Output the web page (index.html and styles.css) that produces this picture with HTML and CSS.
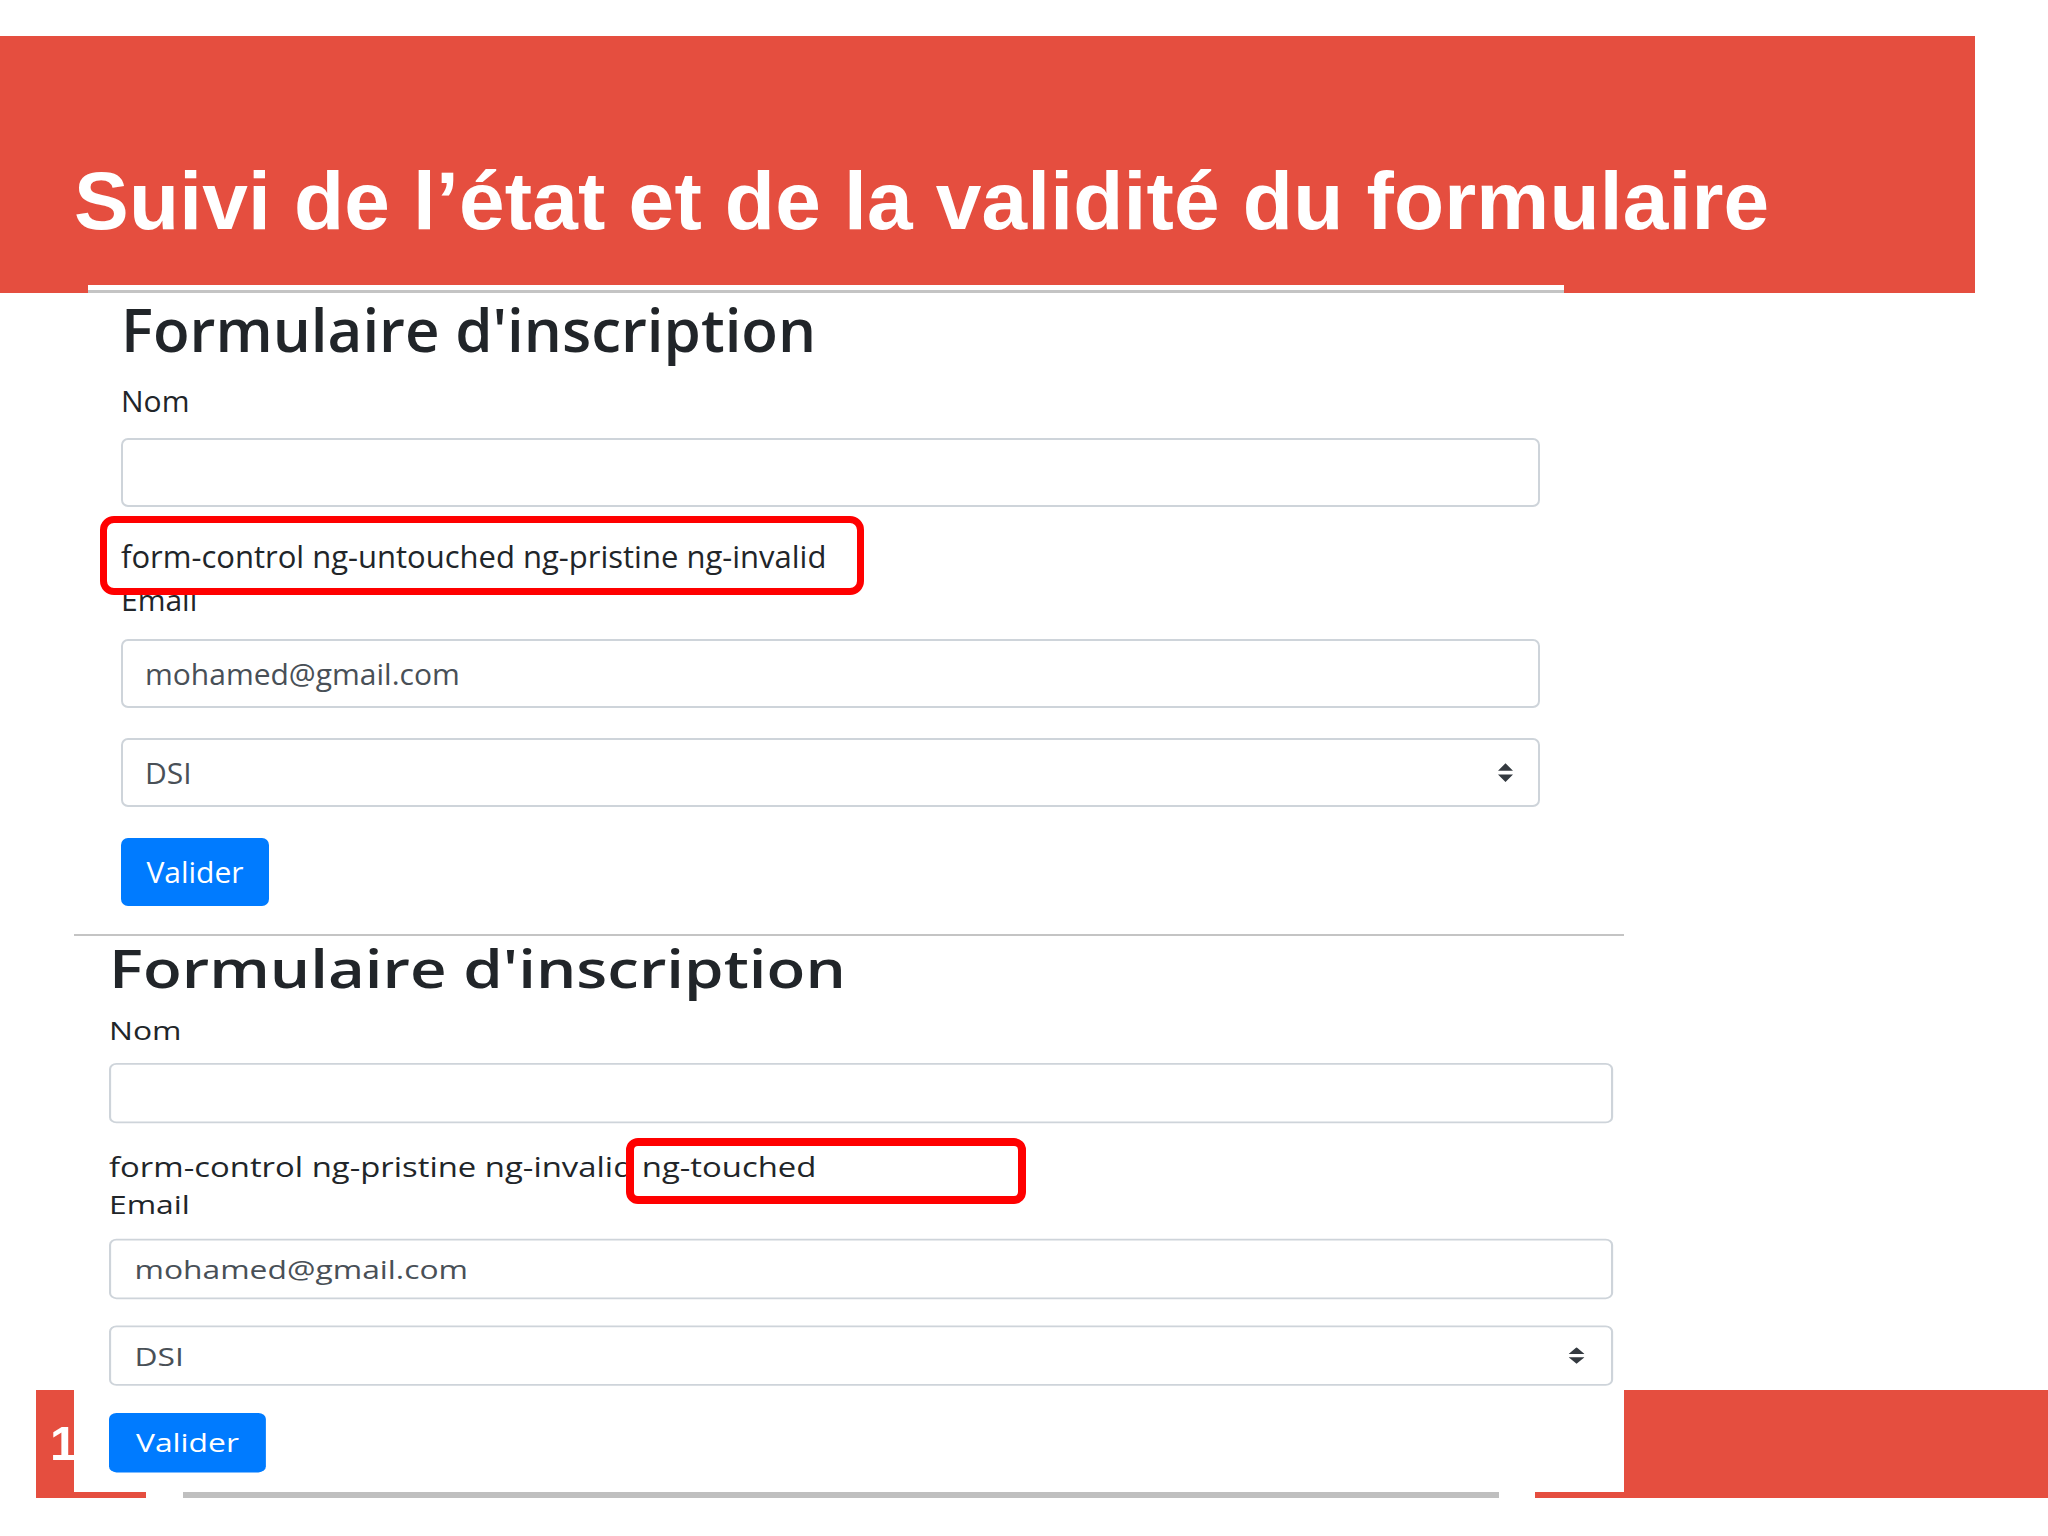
FILE: index.html
```html
<!DOCTYPE html>
<html lang="fr">
<head>
<meta charset="utf-8">
<title>Suivi de l’état et de la validité du formulaire</title>
<link rel="stylesheet" href="styles.css">
</head>
<body>
<div class="slide">
  <header class="band">
    <h1 class="title">Suivi de l’état et de la validité du formulaire</h1>
  </header>

  <section class="shot shot-one">
    <form class="bs-form">
      <h2 class="bs-title">Formulaire d'inscription</h2>
      <label class="lbl">Nom</label>
      <input class="ctl" type="text" value="" readonly>
      <div class="cls">form-control ng-untouched ng-pristine ng-invalid</div>
      <label class="lbl lbl-tight">Email</label>
      <input class="ctl ctl-email" type="text" value="mohamed@gmail.com" readonly>
      <div class="ctl sel">
        <span>DSI</span>
        <svg class="caret" viewBox="0 0 4 5" width="15" height="19"><path d="M2 0L0 2h4zm0 5L0 3h4z" fill="#343a40"/></svg>
      </div>
      <button type="button" class="btn">Valider</button>
    </form>
    <div class="mark mark-one"></div>
  </section>

  <section class="shot shot-two">
    <form class="bs-form bs-form-wide">
      <h2 class="bs-title">Formulaire d'inscription</h2>
      <label class="lbl">Nom</label>
      <input class="ctl" type="text" value="" readonly>
      <div class="cls">form-control ng-pristine ng-invalid ng-touched</div>
      <label class="lbl lbl-tight">Email</label>
      <input class="ctl ctl-email" type="text" value="mohamed@gmail.com" readonly>
      <div class="ctl sel">
        <span>DSI</span>
        <svg class="caret" viewBox="0 0 4 5" width="15" height="19"><path d="M2 0L0 2h4zm0 5L0 3h4z" fill="#343a40"/></svg>
      </div>
      <button type="button" class="btn">Valider</button>
    </form>
    <div class="mark mark-two"></div>
  </section>

  <footer class="foot">
    <div class="slide-num">1</div>
    <div class="foot-strip"><span class="gap gap-a"></span><span class="bar"></span><span class="gap gap-b"></span></div>
  </footer>
</div>
</body>
</html>
```

FILE: styles.css
```css
html, body {
  margin: 0;
  padding: 0;
  background: #ffffff;
}

.slide {
  position: relative;
  width: 2048px;
  height: 1536px;
  overflow: hidden;
  background: #ffffff;
}

/* Red title band */
.band {
  margin-top: 36px;
  width: 1975px;
  height: 257px;
  box-sizing: border-box;
  padding: 115px 0 0 74px;
  background: #e54e3f;
}

.title {
  margin: 0;
  font-family: "Liberation Sans", Arial, sans-serif;
  font-weight: 700;
  font-size: 82px;
  line-height: 100px;
  letter-spacing: 0.2px;
  color: #ffffff;
  white-space: nowrap;
}

/* Screenshots of the form */
.shot {
  position: relative;
  box-sizing: border-box;
  background: #ffffff;
}

.shot-one {
  z-index: 2;
  margin: -8px 0 0 88px;
  width: 1476px;
  height: 649px;
  padding: 8px 24px 0 33px;
  background: linear-gradient(#ffffff 0 5px, #c4c4c4 5px 8px, #ffffff 8px);
}

.shot-two {
  z-index: 2;
  margin: 0 0 0 74px;
  width: 1550px;
  height: 558px;
  padding: 0 0 0 35px;
  border-top: 2px solid #c4c4c4;
}

/* Bootstrap-like form */
.bs-form {
  width: 1419px;
  margin: 0;
  font-family: "Open Sans", "Noto Sans", sans-serif;
  color: #212529;
}

.bs-form-wide {
  transform: scale(1.06, 0.875);
  transform-origin: 0 0;
}

.bs-title {
  margin: 0;
  font-size: 60px;
  font-weight: 600;
  line-height: 72px;
  white-space: nowrap;
}

.lbl {
  display: block;
  margin-top: 14px;
  font-size: 30px;
  line-height: 44px;
}

.lbl-tight {
  margin-top: 0;
}

.ctl {
  display: flex;
  align-items: center;
  width: 100%;
  height: 69px;
  margin: 15px 0 0 0;
  box-sizing: border-box;
  padding: 0 22px;
  border: 2px solid #ced4da;
  border-radius: 7px;
  background: #ffffff;
  font-family: "Open Sans", "Noto Sans", sans-serif;
  font-size: 30px;
  line-height: 44px;
  color: #495057;
  outline: none;
}

.ctl-email {
  margin-top: 17px;
}

.sel {
  margin-top: 30px;
  justify-content: space-between;
  padding-right: 25px;
}

.caret {
  display: block;
}

.cls {
  margin-top: 27px;
  font-size: 31px;
  line-height: 44px;
  white-space: nowrap;
}

.btn {
  display: flex;
  align-items: center;
  justify-content: center;
  width: 148px;
  height: 68px;
  margin-top: 31px;
  padding: 0;
  border: 0;
  border-radius: 7px;
  background: #007bff;
  color: #ffffff;
  font-family: "Open Sans", "Noto Sans", sans-serif;
  font-size: 30px;
  line-height: 44px;
}

/* Red annotation boxes */
.mark {
  position: absolute;
  box-sizing: border-box;
  border: 7px solid #ff0000;
  border-radius: 14px;
}

.mark-one {
  left: 12px;
  top: 231px;
  width: 764px;
  height: 79px;
}

.mark-two {
  left: 552px;
  top: 202px;
  width: 400px;
  height: 66px;
  border-width: 8px;
  border-radius: 12px;
}

/* Footer band */
.foot {
  position: relative;
  z-index: 1;
  margin: -102px 0 0 36px;
  width: 2012px;
  height: 108px;
  background: #e54e3f;
}

.slide-num {
  height: 101px;
  box-sizing: border-box;
  padding: 25px 0 0 14px;
  font-family: "Liberation Sans", Arial, sans-serif;
  font-weight: 700;
  font-size: 49px;
  line-height: 56px;
  color: #ffffff;
}

.foot-strip {
  display: flex;
  height: 7px;
  margin-left: 110px;
}

.gap {
  background: #ffffff;
}

.gap-a {
  width: 37px;
}

.gap-b {
  width: 36px;
}

.bar {
  width: 1316px;
  background: #bfbfbf;
}
```
